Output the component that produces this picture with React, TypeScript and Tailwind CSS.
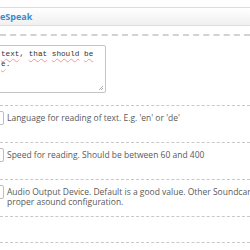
import React from 'react';

function SpellWord({ children }: { children: React.ReactNode }) {
  return (
    <span className="underline decoration-wavy decoration-[#f09a9a] decoration-[1px] underline-offset-[2px]">
      {children}
    </span>
  );
}

function OptionRow({ lines }: { lines: string[] }) {
  return (
    <div className="flex h-[37px] items-start border-b border-dashed border-[#c8c8c8] pt-[5px]">
      <div className="-ml-[10px] h-[14px] w-[14px] shrink-0 rounded-[2px] border border-[#bdbdbd] bg-white" />
      <div className="ml-[3px] whitespace-nowrap pt-[2px] text-[8.5px] leading-[10px] text-[#5a5a5a]">
        {lines.map((l, i) => (
          <div key={i}>{l}</div>
        ))}
      </div>
    </div>
  );
}

export default function App() {
  return (
    <div className="h-[250px] w-[250px] overflow-hidden bg-white pt-[7px] font-['Open_Sans',sans-serif]">
      <div className="flex h-[19px] items-center border-y border-[#dddddd] bg-gradient-to-b from-white to-[#f0f0f0]">
        <span className="text-[9px] font-bold text-[#3a8bd0]">eSpeak</span>
      </div>
      <div className="mt-[8px] border-t-2 border-dashed border-[#d2d2d2]" />

      <div className="relative mt-[9px] -ml-[20px] h-[48px] w-[126px] rounded-[2px] border border-[#c4c4c4] bg-white">
        <div className="pl-[20px] pt-[3px] font-['Liberation_Mono',monospace] text-[7.7px] leading-[10px] text-[#333]">
          <div className="whitespace-pre">
            <SpellWord>text</SpellWord>, <SpellWord>that</SpellWord> <SpellWord>should</SpellWord> <SpellWord>be</SpellWord>
          </div>
          <div className="whitespace-pre">
            <SpellWord>e</SpellWord>.
          </div>
        </div>
        <svg className="absolute bottom-[1px] right-[1px]" width="6" height="6" viewBox="0 0 6 6">
          <path d="M5 1 L1 5 M5 3 L3 5" stroke="#a0a0a0" strokeWidth="0.8" />
        </svg>
      </div>

      <div className="mt-[12px] border-t border-dashed border-[#c8c8c8]" />
      <OptionRow lines={["Language for reading of text. E.g. 'en' or 'de'"]} />
      <OptionRow lines={['Speed for reading. Should be between 60 and 400']} />
      <OptionRow
        lines={[
          'Audio Output Device. Default is a good value. Other Soundcards need a',
          'proper asound configuration.',
        ]}
      />
      <div className="h-[26px] border-b border-dashed border-[#c8c8c8]" />
    </div>
  );
}
